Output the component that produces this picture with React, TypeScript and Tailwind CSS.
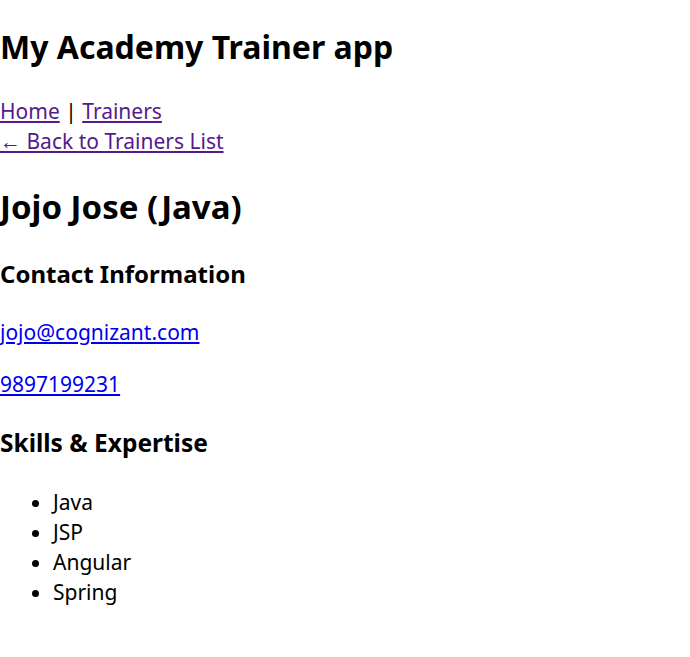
import React from "react";

const skills = ["Java", "JSP", "Angular", "Spring"];

export default function App() {
  return (
    <div className="min-h-screen bg-white text-black font-['Noto_Sans',sans-serif] text-[21px] leading-[30px]">
      <h1 className="pt-[23px] text-[32px] leading-[48px] font-bold">My Academy Trainer app</h1>

      <nav className="mt-[25px]">
        <a href="#" className="text-[#551a8b] underline">Home</a>
        {" | "}
        <a href="#" className="text-[#551a8b] underline">Trainers</a>
      </nav>
      <div>
        <a href="#" className="text-[#551a8b] underline">← Back to Trainers List</a>
      </div>

      <h2 className="mt-[31px] text-[33px] leading-[40px] font-bold">Jojo Jose (Java)</h2>

      <h3 className="mt-[31px] text-[24px] leading-[32px] font-bold">Contact Information</h3>
      <p className="mt-[27px]">
        <a href="#" className="text-[#0000ee] underline">jojo@cognizant.com</a>
      </p>
      <p className="mt-[22px]">
        <a href="#" className="text-[#0000ee] underline">9897199231</a>
      </p>

      <h3 className="mt-[28px] text-[24.5px] leading-[32px] font-bold">Skills &amp; Expertise</h3>
      <ul className="mt-[28px] list-disc pl-[53px]">
        {skills.map((s) => (
          <li key={s}>{s}</li>
        ))}
      </ul>
    </div>
  );
}
